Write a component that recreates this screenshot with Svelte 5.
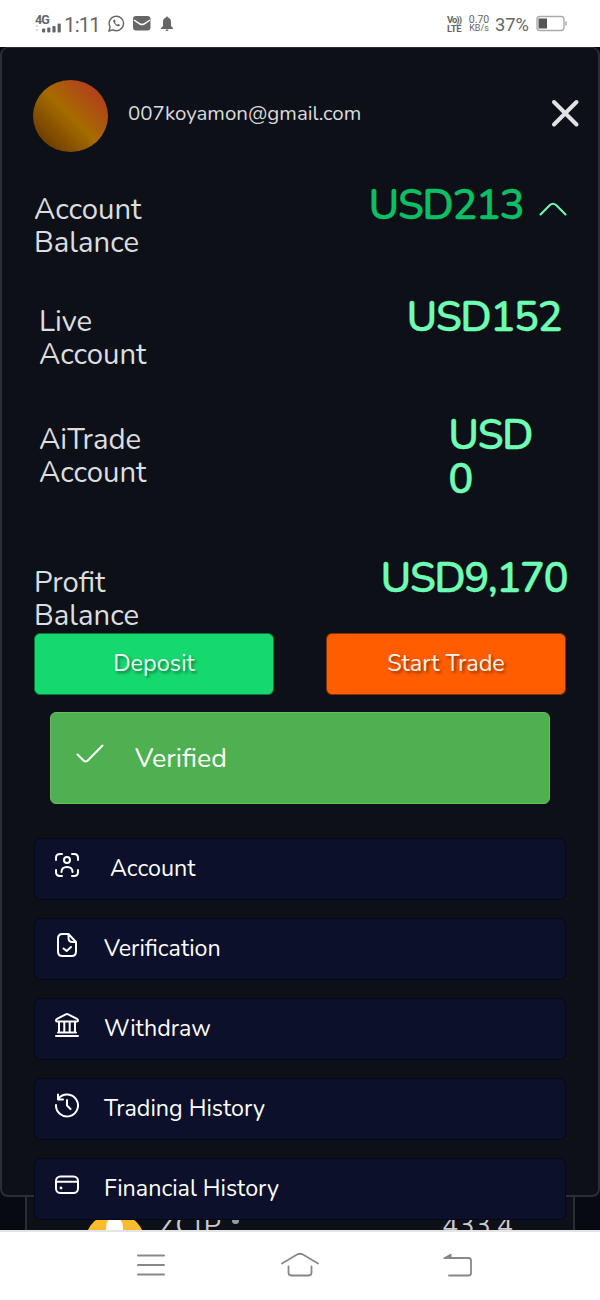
<script lang="ts">
	let open = true;

	const menu = [
		{ icon: 'account', label: 'Account', offset: true },
		{ icon: 'verification', label: 'Verification' },
		{ icon: 'withdraw', label: 'Withdraw' },
		{ icon: 'trading', label: 'Trading History' },
		{ icon: 'financial', label: 'Financial History' }
	];

	const bars = [4, 5, 6.5, 9];
</script>

<div class="screen">
	<header class="status">
		<div class="network">
			<span>4G</span>
			<svg width="27" height="10" viewBox="0 0 27 10">
				<path d="M0 4l2-3 2 3zM0 6l2 3 2-3z" fill="#ddd" />
				{#each bars as h, i}
					<rect x={7 + i * 5.2} y={9.5 - h} width="3.2" height={h} rx="1" fill="#666" />
				{/each}
			</svg>
		</div>
		<span class="clock">1:11</span>
		<svg class="whatsapp" width="17" height="17" viewBox="0 0 17 17" fill="none" stroke="#666" stroke-width="1.4">
			<path d="M1 16l1.1-4A7.2 7.2 0 1 1 5 14.8z" />
			<path d="M5.8 4.7c-1 .6-.8 2.3.9 4.2 1.8 2 3.9 3 5 1.8.6-.6.3-1-.9-1.5-.8-.4-1 .6-1.6.5-.8-.2-2-1.4-2.2-2.1-.1-.5.8-.7.5-1.4-.4-1.1-.8-1.9-1.7-1.5z" fill="#666" stroke="none" />
		</svg>
		<svg class="mail" width="18" height="15" viewBox="0 0 18 15">
			<rect width="17.5" height="14.5" rx="3" fill="#666" />
			<path d="M1 4l6 4q2 1 4 0l6-4" fill="none" stroke="#fff" stroke-width="1.5" />
		</svg>
		<svg class="bell" width="12" height="15" viewBox="0 0 12 15" fill="#666">
			<path d="M5 1.5a1 1 0 0 1 2 0C9.3 2.2 10 4 10 6v4l2 2v1H0v-1l2-2V6c0-2 .7-3.8 3-4.5zM4.5 13.5h3a1.5 1.5 0 0 1-3 0z" />
		</svg>
		<div class="volte"><span class="vo">Vo))</span><span>LTE</span></div>
		<div class="speed"><span class="rate">0.70</span><span>KB/s</span></div>
		<span class="percent">37%</span>
		<svg class="battery" width="31" height="17" viewBox="0 0 31 17">
			<rect x="1" y="1.5" width="27" height="14" rx="3" fill="none" stroke="#aaa" stroke-width="1.4" />
			<rect x="2.5" y="3.5" width="8.5" height="10" fill="#555" />
			<path d="M30 6.5v4" stroke="#aaa" stroke-width="1.5" />
		</svg>
	</header>

	<main class="page">
		<section class="market">
			<svg class="coin" width="60" height="60" viewBox="0 0 60 60">
				<circle cx="30" cy="30" r="30" fill="#fbbd2e" />
				<ellipse cx="29.500" cy="16" rx="8.500" ry="14" fill="#fff" />
			</svg>
			<span class="pair">ZClP</span>
			<span class="dot"></span>
			<span class="quote">433.4</span>
		</section>

		<section class="panel">
			<div class="profile">
				<span class="avatar"></span>
				<span class="email">007koyamon@gmail.com</span>
				<button class="close" aria-label="Close">
					<svg width="30" height="30" viewBox="0 0 30 30" fill="none" stroke="#e1e2e4" stroke-width="4" stroke-linecap="round">
						<path d="M4 4l22.5 22.5M26.5 4L4 26.5" />
					</svg>
				</button>
			</div>

			<div class="balance total">
				<span class="label">Account<br />Balance</span>
				<button class="toggle" aria-label="Toggle accounts" on:click={() => (open = !open)}>
					<span class="amount">USD213</span>
					<svg class:closed={!open} width="28" height="14" viewBox="0 0 28 14" fill="none" stroke="#6effb4" stroke-width="2" stroke-linecap="round">
						<path d="M1.5 12.5L10.7 3.3q3.3-3 6.6 0l9.2 9.2" />
					</svg>
				</button>
			</div>
			{#if open}
				<div class="balance live">
					<span class="label">Live<br />Account</span>
					<span class="amount">USD152</span>
				</div>
				<div class="balance ai">
					<span class="label">AiTrade<br />Account</span>
					<span class="amount">USD<br />0</span>
				</div>
			{/if}
			<div class="balance profit">
				<span class="label">Profit<br />Balance</span>
				<span class="amount">USD9,170</span>
			</div>

			<div class="actions">
				<button class="deposit">Deposit</button>
				<button class="trade">Start Trade</button>
			</div>

			<div class="verified">
				<svg width="28" height="20" viewBox="0 0 28 20" fill="none" stroke="#fff" stroke-width="2" stroke-linecap="round">
					<path d="M1.5 10.5l6.5 6.4q1.7 1.2 3.3 0L26.5 1.5" />
				</svg>
				<span>Verified</span>
			</div>

			<nav class="menu">
				{#each menu as item}
					<button class="item">
						<svg width="26" height="26" viewBox="0 0 26 26" fill="none" stroke="#fff" stroke-width="2" stroke-linecap="round" stroke-linejoin="round">
							{#if item.icon === 'account'}
								<path d="M2 8V6q0-4 4-4h2M18 2h2q4 0 4 4v2M24 18v2q0 4-4 4h-2M8 24H6q-4 0-4-4v-2" />
								<circle cx="13" cy="8" r="3" />
								<path d="M7.5 20c0-3 2-5 5.5-5s5.500 2 5.500 5" />
							{:else if item.icon === 'verification'}
								<path d="M14.5 2H8.5Q4 2 4 6.5v13Q4 24 8.5 24h9q4.5 0 4.500-4.500V10zM14.500 2v4q0 4 4 4H22M9.500 16.500l3.200 2.500 4.300-4" />
							{:else if item.icon === 'withdraw'}
								<path d="M2 8.5q0-1.2 1-1.6l8.8-4.5q1.2-.6 2.4 0L23 6.9q1 .4 1 1.6 0 1-1 1H3q-1 0-1-1zM5 10v10M10.3 10v10M15.7 10v10M21 10v10M4 20.5h18M2 24h22" />
							{:else if item.icon === 'trading'}
								<path d="M4 2.5v5h5M4.5 6.5A11 11 0 1 1 2 13M13 8v5.5l3.5 3.5" />
							{:else}
								<rect x="2" y="4.5" width="22" height="16.5" rx="4.5" />
								<path d="M2 9.8h22" />
								<circle cx="7" cy="16" r="1.4" fill="#fff" stroke="none" />
							{/if}
						</svg>
						<span class:offset={item.offset}>{item.label}</span>
					</button>
				{/each}
			</nav>
		</section>
	</main>

	<footer class="navbar">
		<svg class="recent" width="28" height="24" viewBox="0 0 28 24" fill="none" stroke="#888" stroke-width="2" stroke-linecap="round">
			<path d="M1 2.5h26M1 12h26M1 21.5h26" />
		</svg>
		<svg class="home" width="40" height="26" viewBox="0 0 40 26" fill="none" stroke="#888" stroke-width="1.8" stroke-linecap="round">
			<path d="M2 11.5L17 2.5q3-1.5 6 0l15 9M8.5 14.5v6q0 3 3 3h17q3 0 3-3v-6" />
		</svg>
		<svg class="back" width="30" height="25" viewBox="0 0 30 25" fill="none" stroke="#888" stroke-width="1.8" stroke-linecap="round">
			<path d="M2 5h23.500q2.500 0 2.500 2.500v12.500q0 2.500-2.500 2.500H6" />
			<path d="M1 5l7-4v4z" fill="#888" stroke-width="1" />
		</svg>
	</footer>
</div>

<style>
	:global(body) {
		margin: 0;
		background: #fff;
	}

	.screen {
		width: 600px;
		height: 1300px;
		overflow: hidden;
		display: flex;
		flex-direction: column;
		font-family: Nunito, Lato, sans-serif;
		box-sizing: border-box;
	}

	button {
		border: 0;
		padding: 0;
		background: none;
		font: inherit;
		color: inherit;
		cursor: pointer;
	}

	svg {
		display: block;
		flex: none;
	}

	.status {
		height: 47px;
		flex: none;
		box-sizing: border-box;
		display: flex;
		align-items: center;
		padding: 0 33px 0 35px;
		color: #666;
		font-family: Roboto, sans-serif;
	}

	.network {
		width: 28px;
		font-size: 12.5px;
		font-weight: 700;
		line-height: 9px;
		letter-spacing: -0.8px;
	}

	.network svg {
		margin-top: -1px;
	}

	.clock {
		width: 38px;
		margin-top: 2px;
		font-size: 20.5px;
		font-weight: 400;
		text-align: center;
		letter-spacing: -0.9px;
	}

	.whatsapp {
		margin-left: 7px;
	}

	.mail {
		margin-left: 8px;
	}

	.bell {
		margin-left: 10px;
	}

	.volte,
	.speed {
		display: flex;
		flex-direction: column;
		line-height: 9px;
	}

	.volte {
		margin-left: auto;
		width: 16px;
		font-size: 9.5px;
		font-weight: 700;
		letter-spacing: -0.3px;
	}

	.volte .vo {
		letter-spacing: -1px;
	}

	.speed {
		margin-left: 5px;
		width: 22px;
		font-size: 9px;
		text-align: center;
	}

	.speed .rate {
		font-size: 10.5px;
	}

	.percent {
		width: 36px;
		margin-left: 5px;
		margin-top: 1px;
		font-size: 18.3px;
	}

	.battery {
		margin-left: 5px;
	}

	.page {
		position: relative;
		height: 1183px;
		flex: none;
		overflow: hidden;
		background: #070a11;
	}

	/* market list that shows under the open panel */
	.market {
		position: absolute;
		left: 25px;
		right: 25px;
		bottom: 0;
		height: 80px;
		border: solid #2b2e34;
		border-width: 0 2px;
		background: #0d1117;
		color: #c9cad0;
		font-size: 27px;
	}

	.coin,
	.pair,
	.dot,
	.quote {
		position: absolute;
	}

	.coin {
		left: 58px;
		top: 63px;
	}

	.pair {
		left: 132px;
		top: 61px;
		line-height: 30px;
		letter-spacing: 1px;
	}

	.dot {
		left: 205px;
		top: 67px;
		width: 7px;
		height: 7px;
		border-radius: 50%;
		background: #9a9ba1;
	}

	.quote {
		left: 415px;
		top: 61px;
		line-height: 30px;
	}

	.panel {
		position: relative;
		box-sizing: border-box;
		width: 600px;
		height: 1150px;
		padding: 31px 32px 0;
		border: 2px solid #2b2f35;
		border-top-width: 1px;
		border-radius: 8px;
		background: #0d1117;
	}

	.profile {
		display: flex;
		height: 74px;
	}

	.avatar {
		width: 75px;
		height: 72px;
		margin-left: -1px;
		margin-top: 1px;
		border-radius: 50%;
		background: linear-gradient(45deg, #693900 10%, #a66c00 50%, #b33a20 90%);
	}

	.email {
		margin: 22px 0 0 20px;
		color: #d9dade;
		font-size: 20.5px;
		line-height: 24px;
	}

	.close {
		height: 30px;
		margin: 19px -14px 0 auto;
	}

	.balance {
		display: flex;
		justify-content: space-between;
		align-items: flex-start;
		box-sizing: border-box;
	}

	.label {
		color: #dcdde0;
		font-size: 29.3px;
		line-height: 33px;
	}

	.amount {
		margin-top: -9px;
		color: #6effb4;
		font-size: 42px;
		font-weight: 600;
		line-height: 44px;
		letter-spacing: -1.6px;
		text-align: left;
		-webkit-text-stroke: 0.3px currentColor;
	}

	.total {
		height: 112px;
		padding-top: 40px;
	}

	.toggle {
		display: flex;
		gap: 16px;
		margin-right: -1px;
	}

	.toggle svg {
		margin-top: 9px;
	}

	.toggle .closed {
		transform: rotate(180deg);
	}

	.total .amount {
		color: #0bbf65;
	}

	.live {
		height: 118px;
		padding: 40px 5px 0 5px;
	}

	.ai {
		height: 143px;
		padding: 40px 34px 0 5px;
	}

	.profit {
		height: 107px;
		padding-top: 40px;
		margin-right: -1px;
	}

	.actions {
		display: flex;
		justify-content: space-between;
	}

	.actions button {
		box-sizing: border-box;
		width: 240px;
		height: 62px;
		border: 1px solid #087737;
		border-radius: 6px;
		background: #15d86e;
		color: #e9fff2;
		font-size: 23.5px;
		line-height: 58px;
		padding-bottom: 2px;
		text-shadow: 2px 2px 3px rgba(0, 0, 0, 0.45);
	}

	.actions .trade {
		border-color: #813006;
		background: #ff5d00;
		color: #fff1e8;
	}

	.verified {
		box-sizing: border-box;
		height: 92px;
		margin: 17px 16px 34px;
		padding: 0 25px;
		display: flex;
		gap: 31px;
		border: 1px solid #65bb60;
		border-radius: 6px;
		background: #4eb051;
		color: #fff;
		font-size: 26.8px;
		line-height: 90px;
	}

	.verified svg {
		margin-top: 31px;
	}

	.menu {
		display: flex;
		flex-direction: column;
		gap: 18px;
	}

	.item {
		box-sizing: border-box;
		height: 62px;
		flex: none;
		display: flex;
		align-items: flex-start;
		padding-left: 19px;
		border: 1px solid #05071a;
		border-radius: 6px;
		background: #0c102a;
		color: #fff;
		font-size: 23.3px;
		line-height: 58px;
	}

	.item svg {
		margin: 13px 24px 0 0;
	}

	.item .offset {
		margin-left: 6px;
	}

	.navbar {
		height: 70px;
		flex: none;
		box-sizing: border-box;
		display: flex;
		align-items: center;
		padding: 0 127px 2px 137px;
		justify-content: space-between;
		border-top: 2px solid #e3e4e6;
		background: #fff;
	}

	.home {
		margin: 0 4px 0 -4px;
	}
</style>
